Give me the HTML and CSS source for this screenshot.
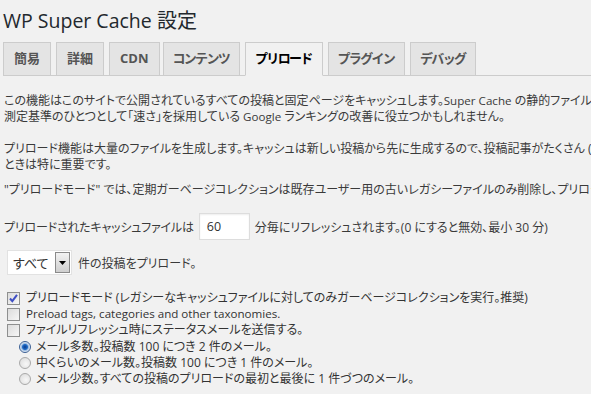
FILE: index.html
```html
<!DOCTYPE html>
<html lang="ja">
<head>
<meta charset="utf-8">
<title>WP Super Cache 設定</title>
<link rel="stylesheet" href="styles.css">
</head>
<body>
<div class="wrap">
  <h1 class="title"><span class="title-en">WP Super Cache</span> 設定</h1>
  <nav class="tabs">
    <a class="tab">簡易</a>
    <a class="tab">詳細</a>
    <a class="tab latin">CDN</a>
    <a class="tab kana">コンテンツ</a>
    <a class="tab kana active">プリロード</a>
    <a class="tab kana">プラグイン</a>
    <a class="tab kana">デバッグ</a>
  </nav>
  <div class="content">
    <p class="para">この機能はこのサイトで公開されているすべての投稿と固定ページをキャッシュします。<span class="en">Super Cache</span> の静的ファイルが作成されるので、ページを最速で表示することができます。ページ表示の速度は<br>測定基準のひとつとして「速さ」を採用している <span class="en">Google</span> ランキングの改善に役立つかもしれません。</p>
    <p class="para p2">プリロード機能は大量のファイルを生成します。キャッシュは新しい投稿から先に生成するので、投稿記事がたくさん (数千以上) ある<br>ときは特に重要です。</p>
    <p class="para p3">"プリロードモード" では、定期ガーベージコレクションは既存ユーザー用の古いレガシーファイルのみ削除し、プリロードされたファイルは削除しません。</p>
    <div class="row refresh">
      <span class="tight">プリロードされたキャッシュファイルは</span>
      <span class="input">60</span>
      <span>分毎にリフレッシュされます。(0 にすると無効、最小 30 分)</span>
    </div>
    <div class="row count">
      <span class="select"><span class="select-val">すべて</span><span class="select-btn"><svg width="7" height="4" viewBox="0 0 7 4"><path d="M0 0h7L3.5 4z" fill="#000"/></svg></span></span>
      <span>件の投稿をプリロード。</span>
    </div>
    <ul class="options">
      <li class="opt"><span class="cb checked"><svg width="11" height="11" viewBox="0 0 11 11"><path d="M2 5.5l2.3 2.6L9 1.8" fill="none" stroke="#3f4fc4" stroke-width="2"/></svg></span>プリロードモード (レガシーなキャッシュファイルに対してのみガーベージコレクションを実行。推奨)</li>
      <li class="opt"><span class="cb"></span><span class="en">Preload tags, categories and other taxonomies.</span></li>
      <li class="opt"><span class="cb"></span>ファイルリフレッシュ時にステータスメールを送信する。</li>
      <li class="opt radio-opt"><span class="rb on"></span>メール多数。投稿数 100 につき 2 件のメール。</li>
      <li class="opt radio-opt"><span class="rb"></span>中くらいのメール数。投稿数 100 につき 1 件のメール。</li>
      <li class="opt radio-opt"><span class="rb"></span>メール少数。すべての投稿のプリロードの最初と最後に 1 件づつのメール。</li>
    </ul>
  </div>
</div>
</body>
</html>
```

FILE: styles.css
```css
html, body {
  margin: 0;
  padding: 0;
  background: #f1f1f1;
  overflow: hidden;
}
body {
  font-family: "Open Sans", "Noto Sans CJK JP", sans-serif;
  font-size: 12px;
  font-feature-settings: "palt";
  color: #3a3a3a;
}
.en {
  font-size: 11.6px;
}
.wrap {
  padding-left: 3px;
  width: 1100px;
}
.title {
  margin: 0;
  padding-top: 7px;
  font-size: 20px;
  font-weight: 400;
  line-height: 28px;
  color: #23282d;
}
.title-en {
  font-size: 19.5px;
}
.tabs {
  display: flex;
  margin-top: 7px;
  border-bottom: 1px solid #ccc;
  height: 33px;
}
.tab {
  display: block;
  box-sizing: border-box;
  height: 34px;
  padding: 0 10px;
  margin-right: 5px;
  border: 1px solid #ccc;
  background: #e4e4e4;
  color: #555;
  font-size: 13px;
  font-weight: 700;
  line-height: 31px;
  font-feature-settings: normal;
}
.tab.latin {
  margin-right: 3px;
}
.tab.kana {
  letter-spacing: -1.7px;
  padding: 0 10px 0 9px;
}
.tab.active {
  background: #f1f1f1;
  border-bottom-color: #f1f1f1;
  color: #000;
}
.content {
  padding-left: 1px;
  padding-top: 17px;
}
.para {
  margin: 0 0 16px;
  line-height: 16px;
  white-space: nowrap;
}
.para.p2 {
  margin-bottom: 9px;
}
.para.p3 {
  margin-bottom: 15px;
}
.row {
  display: flex;
  align-items: center;
  white-space: nowrap;
}
.refresh {
  gap: 5px;
}
.tight {
  letter-spacing: -0.2px;
}
.input {
  box-sizing: border-box;
  width: 51px;
  height: 27px;
  padding-left: 7px;
  background: #fff;
  border: 1px solid #ddd;
  box-shadow: inset 0 1px 2px rgba(0,0,0,0.07);
  line-height: 25px;
  color: #333;
  font-size: 12.5px;
}
.count {
  margin-top: 10px;
  margin-left: 3px;
  gap: 6px;
}
.select {
  display: flex;
  align-items: center;
  box-sizing: border-box;
  width: 65px;
  height: 25px;
  background: #fff;
  border: 1px solid #e2e2e2;
  padding-left: 5px;
  font-size: 13px;
}
.select-val {
  flex: 1;
  color: #333;
}
.select-btn {
  display: flex;
  align-items: center;
  justify-content: center;
  box-sizing: border-box;
  width: 15px;
  height: 21px;
  margin-right: 1px;
  border: 1px solid #8a8a8a;
  background: linear-gradient(#f2f2f2, #cfcfcf);
}
.options {
  list-style: none;
  margin: 15px 0 0 3px;
  padding: 0;
}
.opt {
  display: flex;
  align-items: center;
  height: 16.2px;
  line-height: 16px;
  white-space: nowrap;
  color: #333;
}
.cb {
  display: flex;
  align-items: center;
  justify-content: center;
  box-sizing: border-box;
  width: 13px;
  height: 13px;
  margin-right: 6px;
  border: 1px solid #8e8f8f;
  background: linear-gradient(135deg, #dcdcdc, #f6f6f6);
}
.radio-opt {
  padding-left: 12px;
}
.rb {
  box-sizing: border-box;
  width: 12px;
  height: 12px;
  margin-right: 5px;
  border-radius: 50%;
  border: 1px solid #a9a9a9;
  background: radial-gradient(circle at 60% 60%, #f7f7f7, #d9d9d9);
}
.rb.on {
  border-color: #3a5f94;
  background: radial-gradient(circle at 50% 50%, #0c3a8a 0, #1e6cc8 2.5px, #9bbce2 3.5px, #e8eef6 5px);
}
```
